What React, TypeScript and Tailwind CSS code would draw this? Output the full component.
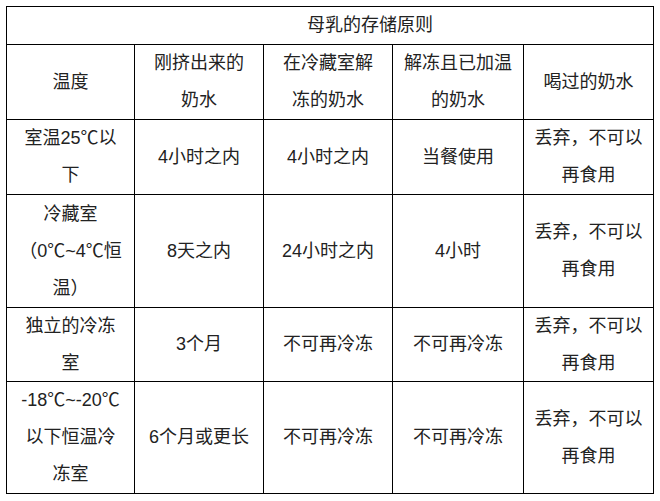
const FONT = "font-['Liberation_Sans','Noto_Sans_CJK_SC',sans-serif]";

type Cell = string[];

const HEADERS: Cell[] = [
  ['温度'],
  ['刚挤出来的', '奶水'],
  ['在冷藏室解', '冻的奶水'],
  ['解冻且已加温', '的奶水'],
  ['喝过的奶水'],
];

const DISCARD: Cell = ['丢弃，不可以', '再食用'];

const ROWS: Cell[][] = [
  [['室温25℃以', '下'], ['4小时之内'], ['4小时之内'], ['当餐使用'], DISCARD],
  [['冷藏室', '（0℃~4℃恒', '温）'], ['8天之内'], ['24小时之内'], ['4小时'], DISCARD],
  [['独立的冷冻', '室'], ['3个月'], ['不可再冷冻'], ['不可再冷冻'], DISCARD],
  [['-18℃~-20℃', '以下恒温冷', '冻室'], ['6个月或更长'], ['不可再冷冻'], ['不可再冷冻'], DISCARD],
];

function TableCell({ lines }: { lines: Cell }) {
  return (
    <div className="flex flex-col items-center justify-center bg-white text-center leading-[37px] whitespace-nowrap">
      {lines.map((line) => (
        <span key={line}>{line}</span>
      ))}
    </div>
  );
}

export default function App() {
  return (
    <div className={`min-h-[501px] w-[660px] bg-white pt-[6px] pl-[6px] text-[18px] text-[#222] ${FONT}`}>
      <div className="grid w-fit grid-cols-[127px_128px_128px_130px_129px] grid-rows-[37px_74px_74px_112px_73px_111px] gap-px bg-black p-px">
        {/* title spans the whole table, sits a bit right of centre like the original */}
        <div className="col-span-5 flex items-center justify-center bg-white pl-[80px] leading-[37px]">
          母乳的存储原则
        </div>
        {HEADERS.map((h, i) => (
          <TableCell key={`h${i}`} lines={h} />
        ))}
        {ROWS.map((row, r) =>
          row.map((cell, c) => <TableCell key={`${r}-${c}`} lines={cell} />),
        )}
      </div>
    </div>
  );
}
